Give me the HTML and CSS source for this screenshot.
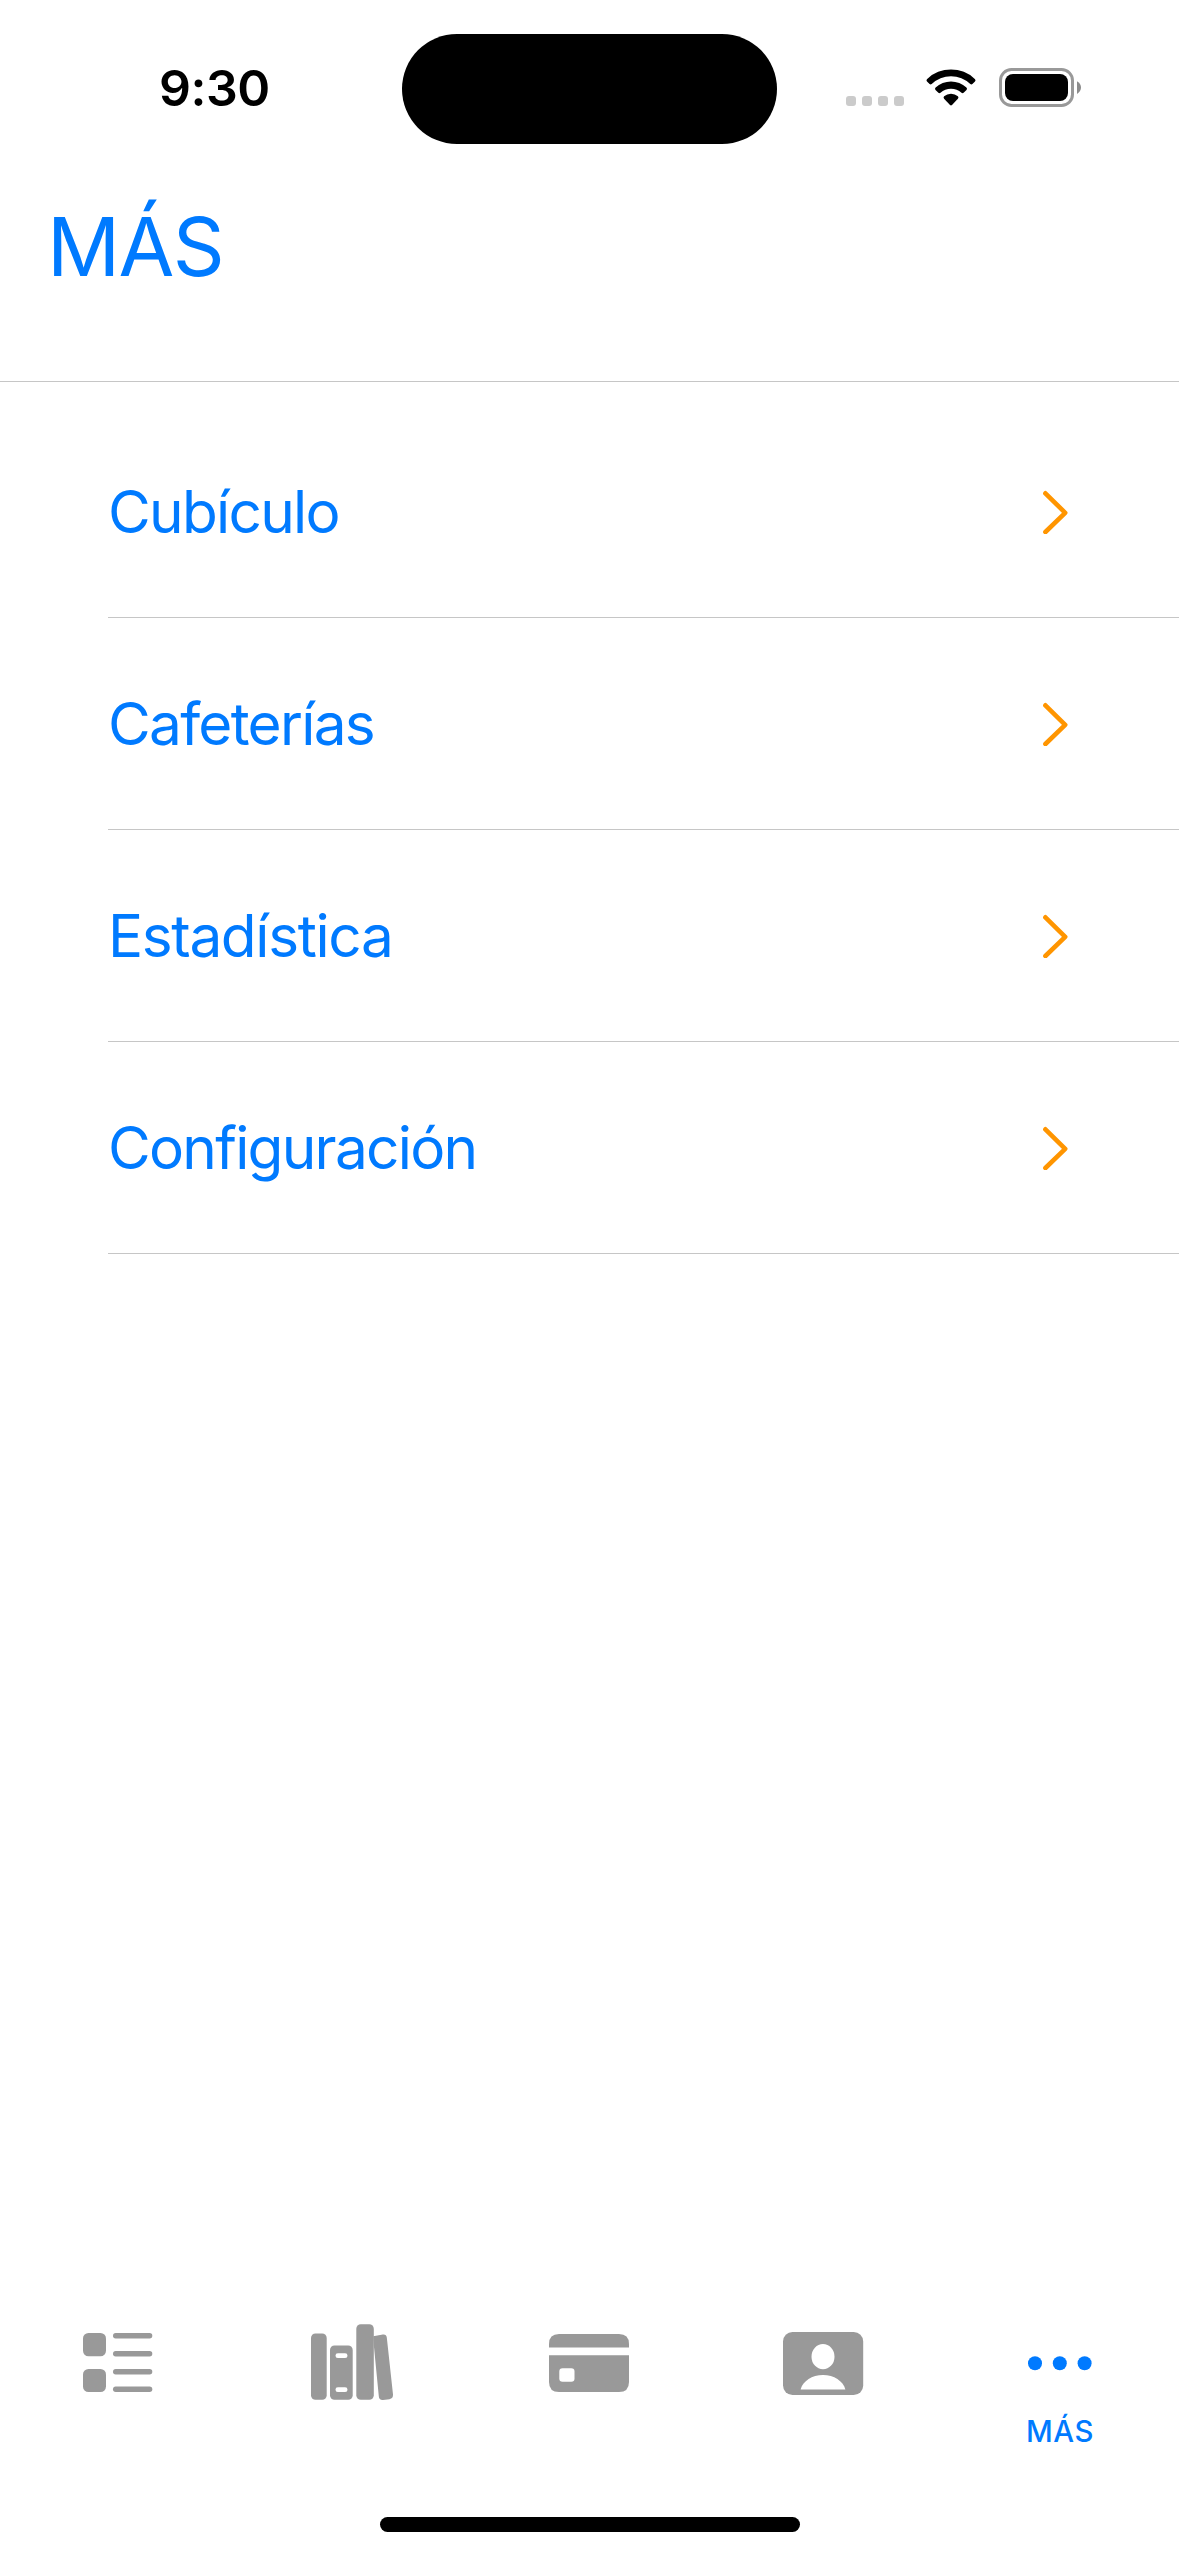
FILE: index.html
```html
<!DOCTYPE html>
<html lang="es">
<head>
<meta charset="utf-8">
<title>Más</title>
<link rel="stylesheet" href="styles.css">
</head>
<body>
<div class="screen">
  <div class="status-bar">
    <div class="time">9:30</div>
    <div class="island"></div>
    <div class="status-icons">
      <svg class="signal" width="58" height="40" viewBox="0 0 58 40" fill="#cbcbcb">
        <rect x="0" y="28" width="10" height="10" rx="3"/>
        <rect x="16" y="28" width="10" height="10" rx="3"/>
        <rect x="32" y="28" width="10" height="10" rx="3"/>
        <rect x="48" y="28" width="10" height="10" rx="3"/>
      </svg>
      <svg class="wifi" width="50" height="40" viewBox="0 0 50 40">
        <path d="M1.2 10.9A34.5 34.5 0 0 1 48.8 10.9Q50.1 12.2 49 13.4L46.4 16Q45.4 16.9 44.3 16A27.8 27.8 0 0 0 5.7 16Q4.6 16.9 3.6 16L1 13.4Q-.1 12.2 1.2 10.9Z"/>
        <path d="M9.6 19.6A22.5 22.5 0 0 1 40.4 19.6Q41.6 20.9 40.5 22.1L37.6 24.8Q36.6 25.7 35.5 24.8A15.5 15.5 0 0 0 14.5 24.8Q13.4 25.7 12.4 24.8L9.5 22.1Q8.4 20.9 9.6 19.6Z"/>
        <path d="M18.1 28.3A10.4 10.4 0 0 1 31.9 28.3Q33 29.6 31.9 30.8L26 37Q25 37.9 24 37L18.1 30.8Q17 29.6 18.1 28.3Z"/>
      </svg>
      <svg class="battery" width="82" height="40" viewBox="0 0 82 40">
        <rect x="1.5" y="1.5" width="72" height="36" rx="11" fill="none" stroke="#999" stroke-width="3"/>
        <rect x="6" y="6" width="63" height="27" rx="8"/>
        <path d="M78 13.2Q82 15.7 82 19.6T78 26Z" fill="#8c8c8c"/>
      </svg>
    </div>
  </div>

  <header class="header">
    <h1 class="title">MÁS</h1>
  </header>

  <ul class="menu">
    <li class="row"><span>Cubículo</span><svg class="chevron" width="25" height="44" viewBox="0 0 25 44"><path d="M2.4 3.3L22.2 22.8L2.4 42"/></svg></li>
    <li class="row"><span>Cafeterías</span><svg class="chevron" width="25" height="44" viewBox="0 0 25 44"><path d="M2.4 3.3L22.2 22.8L2.4 42"/></svg></li>
    <li class="row"><span class="wide">Estadística</span><svg class="chevron" width="25" height="44" viewBox="0 0 25 44"><path d="M2.4 3.3L22.2 22.8L2.4 42"/></svg></li>
    <li class="row"><span>Configuración</span><svg class="chevron" width="25" height="44" viewBox="0 0 25 44"><path d="M2.4 3.3L22.2 22.8L2.4 42"/></svg></li>
  </ul>

  <nav class="tabs">
    <div class="tab">
      <svg class="icon" viewBox="0 0 100 100">
        <rect x="15" y="19" width="23" height="23.3" rx="5.5"/>
        <rect x="15" y="55" width="23" height="23" rx="5.5"/>
        <rect x="45" y="19" width="39.3" height="5.4" rx="2.7"/>
        <rect x="45" y="37" width="39.3" height="5.4" rx="2.7"/>
        <rect x="45" y="55" width="39.3" height="5.4" rx="2.7"/>
        <rect x="45" y="72.6" width="39.3" height="5.4" rx="2.7"/>
      </svg>
    </div>
    <div class="tab">
      <svg class="icon" viewBox="0 0 100 100">
        <rect x="7" y="19.5" width="15.7" height="66.3" rx="4.5"/>
        <rect x="26" y="31.5" width="22.7" height="54.3" rx="4.5"/>
        <rect x="52.3" y="10.3" width="17.5" height="75.5" rx="4.5"/>
        <path d="M69.3 22.2L78.8 20.5Q82.4 20 82.8 23.6L89 80.6Q89.3 84.6 85.4 85.2L79 85.9Q75.1 86.2 74.8 82.2L69.8 31Z"/>
        <rect class="cut" x="31.5" y="39.3" width="12" height="4.7" rx="2.35"/>
        <rect class="cut" x="31.5" y="73.3" width="12" height="4.7" rx="2.35"/>
      </svg>
    </div>
    <div class="tab">
      <svg class="icon" viewBox="0.5 0 100 100">
        <path d="M9.5 33.4V30Q9.5 20 19.5 20H79.5Q89.5 20 89.5 30V33.4Z"/>
        <path d="M9.5 41.2H89.5V68Q89.5 78 79.5 78H19.5Q9.5 78 9.5 68Z"/>
        <rect class="cut" x="19.8" y="54.3" width="15.2" height="13.5" rx="3.2"/>
      </svg>
    </div>
    <div class="tab">
      <svg class="icon" viewBox="0 0 100 100">
        <rect x="8" y="18" width="80.2" height="63" rx="9.5"/>
        <ellipse class="cut" cx="48" cy="42.7" rx="11.5" ry="12.6"/>
        <path class="cut" d="M25.6 75.4C28 67 37 61 48 61S68 67 70.4 75.4Z"/>
      </svg>
    </div>
    <div class="tab active">
      <svg class="icon" viewBox="0 0 100 100">
        <circle cx="24" cy="49.2" r="7"/>
        <circle cx="48.8" cy="49.2" r="7"/>
        <circle cx="73.6" cy="49.2" r="7"/>
      </svg>
      <span class="tab-label">MÁS</span>
    </div>
  </nav>
  <div class="home-indicator"></div>
</div>
</body>
</html>
```
FILE: styles.css
```css
* {
  box-sizing: border-box;
}

body {
  margin: 0;
  background: #fff;
  font-family: Inter, "Liberation Sans", sans-serif;
  color: #007aff;
}

.screen {
  display: flex;
  flex-direction: column;
  width: 1179px;
  height: 2556px;
  overflow: hidden;
}

.status-bar {
  display: grid;
  grid-template-columns: 1fr 375px 1fr;
  align-items: start;
  height: 144px;
  padding-top: 34px;
  color: #000;
}

.time {
  padding: 24px 0 0 159px;
  font-size: 50px;
  font-weight: 600;
  line-height: 60px;
  letter-spacing: -0.5px;
}

.island {
  height: 110px;
  border-radius: 55px;
  background: #000;
}

.status-icons {
  display: flex;
  padding: 34px 0 0 69px;
}

.wifi {
  margin-left: 22px;
}

.battery {
  margin-left: 23px;
}

.header {
  height: 238px;
  padding: 53px 47px 0;
  border-bottom: 1px solid #c6c6c6;
}

.title {
  margin: 0;
  font-size: 81px;
  font-weight: 400;
  line-height: 100px;
  letter-spacing: -1.7px;
}

.menu {
  margin: 0;
  padding: 24px 0 0 108px;
  list-style: none;
}

.row {
  display: flex;
  align-items: center;
  justify-content: space-between;
  height: 212px;
  padding-right: 111px;
  border-bottom: 1px solid #c6c6c6;
  font-size: 58.5px;
  line-height: 72px;
  letter-spacing: -1.72px;
}

.wide {
  letter-spacing: -1.36px;
}

.chevron {
  fill: none;
  stroke: #ff9500;
  stroke-width: 4.6;
  stroke-linecap: round;
  stroke-linejoin: round;
}

.tabs {
  display: grid;
  grid-template-columns: 236px 236px 235px 236px 236px;
  height: 203px;
  margin-top: auto;
}

.tab {
  display: flex;
  flex-direction: column;
  align-items: center;
  color: #999;
}

.tab.active {
  color: #007aff;
}

.icon {
  width: 100px;
  height: 100px;
  fill: currentColor;
}

.icon .cut {
  fill: #fff;
}

.tab-label {
  padding-right: 2px;
  font-size: 29.3px;
  font-weight: 500;
  line-height: 36px;
  letter-spacing: 0.5px;
}

.home-indicator {
  width: 420px;
  height: 15px;
  margin: 0 auto 24px;
  border-radius: 8px;
  background: #000;
}
```
